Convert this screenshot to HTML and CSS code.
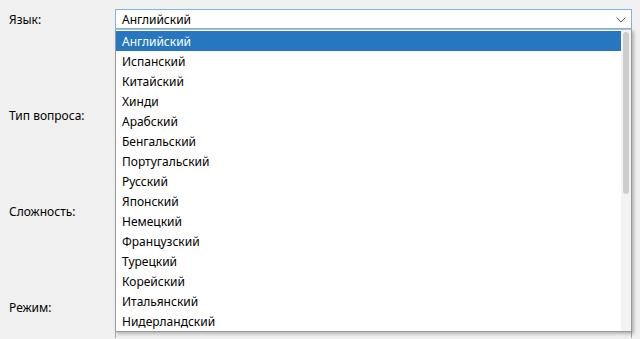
FILE: index.html
```html
<!DOCTYPE html>
<html lang="ru">
<head>
<meta charset="utf-8">
<link rel="stylesheet" href="styles.css">
</head>
<body>
<div class="form">
  <div class="row r1">
    <div class="label">Язык:</div>
    <div class="combo">
      <span class="combo-text">Английский</span>
      <svg class="chev" width="10" height="6" viewBox="0 0 10 6"><polyline points="0.5,0.5 5,5 9.5,0.5" fill="none" stroke="#606060" stroke-width="1"/></svg>
    </div>
  </div>
  <div class="row r2">
    <div class="label">Тип вопроса:</div>
    <div class="ctl"></div>
  </div>
  <div class="row r3">
    <div class="label">Сложность:</div>
    <div class="ctl"></div>
  </div>
  <div class="row r4">
    <div class="label">Режим:</div>
    <div class="ctl tall"></div>
  </div>
</div>
<div class="dropdown">
  <ul class="items">
    <li class="sel">Английский</li>
    <li>Испанский</li>
    <li>Китайский</li>
    <li>Хинди</li>
    <li>Арабский</li>
    <li>Бенгальский</li>
    <li>Португальский</li>
    <li>Русский</li>
    <li>Японский</li>
    <li>Немецкий</li>
    <li>Французский</li>
    <li>Турецкий</li>
    <li>Корейский</li>
    <li>Итальянский</li>
    <li>Нидерландский</li>
  </ul>
  <div class="scroll"><div class="thumb"></div></div>
</div>
</body>
</html>
```
FILE: styles.css
```css
html, body {
  margin: 0;
  padding: 0;
  background: #f0f0f0;
  font-family: "Noto Sans", "Open Sans", sans-serif;
  font-size: 12px;
  color: #000;
  overflow: hidden;
  height: 339px;
}
.form {
  padding: 9px 8px 0 9px;
  display: flex;
  flex-direction: column;
  gap: 76px;
}
.row {
  display: flex;
  align-items: flex-start;
  height: 20px;
}
.label {
  width: 106px;
  line-height: 20px;
  flex: none;
  padding-top: 1px;
}
.combo {
  flex: 1;
  height: 20px;
  box-sizing: border-box;
  border: 1px solid #7eb4ea;
  background: #fff;
  display: flex;
  align-items: center;
  padding: 0 5px 0 6px;
}
.combo-text {
  flex: 1;
}
.chev {
  display: block;
  margin-top: 1px;
}
.ctl {
  flex: 1;
  height: 20px;
}
.ctl.tall {
  height: 41px;
  box-sizing: border-box;
  border-left: 1px solid #a8a8a8;
  border-right: 1px solid #a8a8a8;
}
.dropdown {
  position: absolute;
  left: 115px;
  top: 29px;
  width: 517px;
  height: 303px;
  box-sizing: border-box;
  border: 1px solid #999;
  border-top-color: #b9b9b9;
  background: #fff;
  display: flex;
  box-shadow: 2px 2px 3px rgba(0,0,0,0.25);
}
.items {
  list-style: none;
  margin: 0;
  padding: 1px 0 0 0;
  flex: 1;
}
.items li {
  height: 20px;
  box-sizing: border-box;
  padding: 2px 0 0 6px;
  line-height: 18px;
}
.items li.sel {
  background: #2677c0;
  color: #fff;
}
.scroll {
  width: 10px;
  flex: none;
  background: #f3f3f3;
  padding: 2px 0 0 2px;
  box-sizing: border-box;
}
.thumb {
  width: 6px;
  height: 162px;
  background: #cdcdcd;
  border-radius: 3px;
}
```
